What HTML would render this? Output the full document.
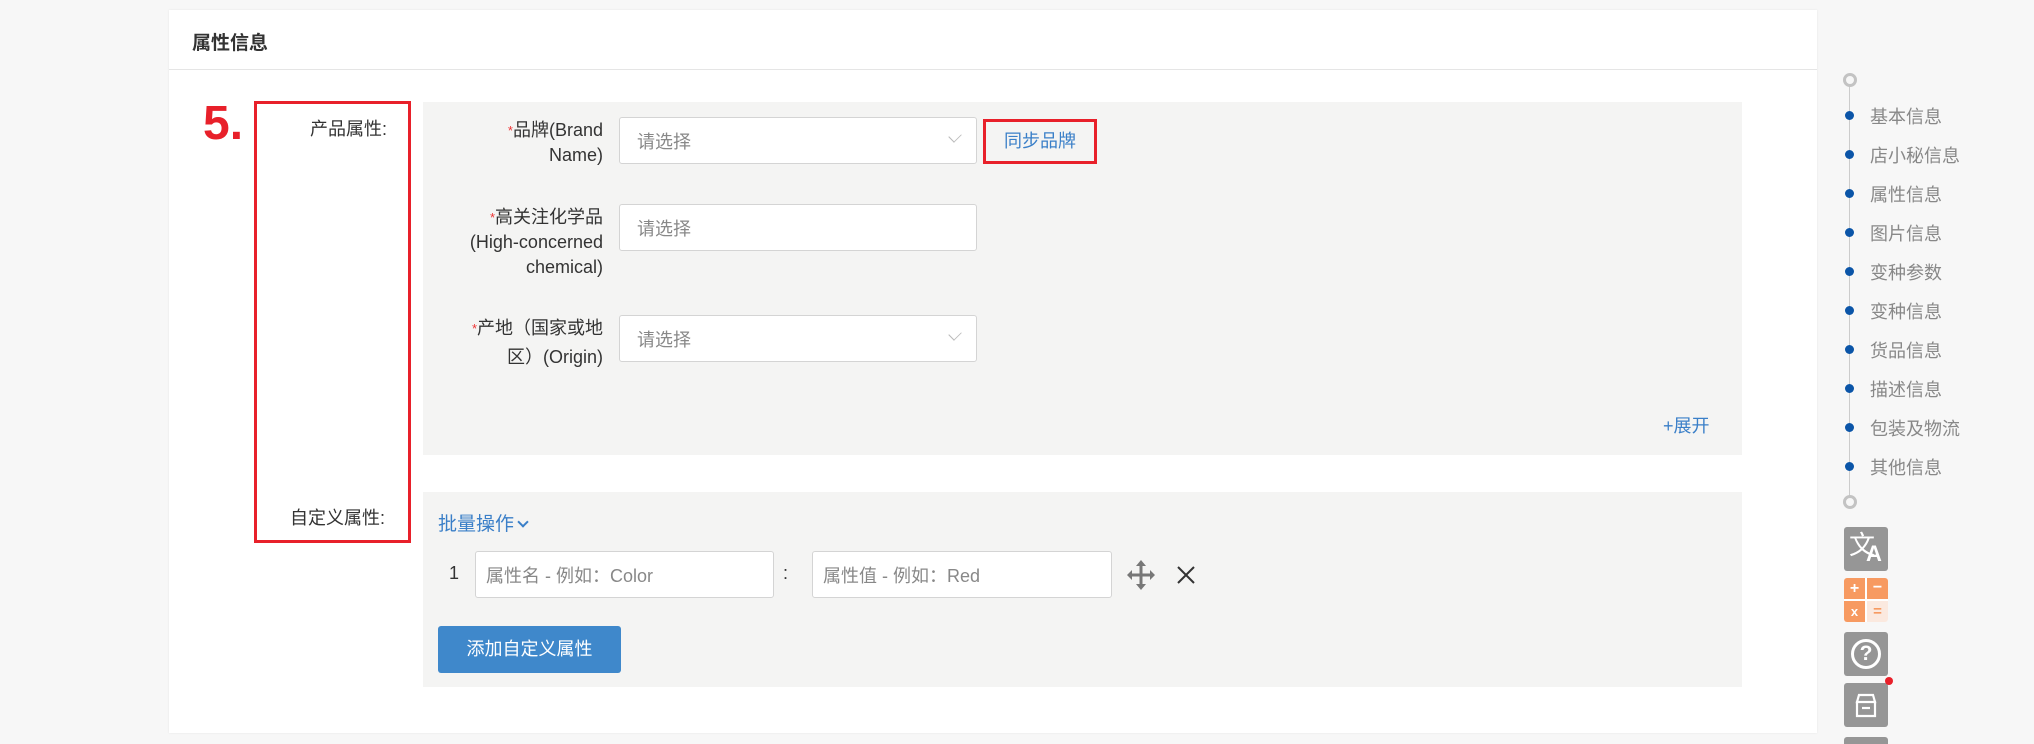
<!DOCTYPE html>
<html style="width:2034px;height:744px;overflow:hidden"><head><meta charset="utf-8"><style>
*{margin:0;padding:0;box-sizing:border-box}
body{width:2034px;height:744px;background:#f7f7f7;position:relative;overflow:hidden;font-family:"Liberation Sans","Noto Sans CJK SC",sans-serif;font-size:18px;color:#333}
.a{position:absolute}
.card{left:169px;top:10px;width:1648px;height:723px;background:#fff;box-shadow:0 0 2px rgba(0,0,0,.08)}
.inp{position:absolute;background:#fff;border:1px solid #d4d4d4;border-radius:3px;color:#888;font-size:18px;padding-left:17px;display:flex;align-items:center}
.lab{position:absolute;text-align:right;line-height:25px;font-size:18px;color:#333}
.st{color:#e33;font-size:13px;vertical-align:top}
.chev{position:absolute;right:16px;top:13px;width:10px;height:10px;border-right:1px solid #bbb;border-bottom:1px solid #bbb;transform:rotate(45deg) scale(.8,1.1)}
.nav{position:absolute;left:1870px;font-size:18px;color:#888}
.dot{position:absolute;left:1845px;width:9px;height:9px;border-radius:50%;background:#0b55a8}
.ic{position:absolute;left:1844px;width:44px;height:44px;border-radius:3px;background:#969696}
</style></head><body>
<div class="a card"></div>
<div class="a" style="left:192px;top:28px;font-size:19px;font-weight:bold;color:#333">属性信息</div>
<div class="a" style="left:169px;top:69px;width:1648px;height:1px;background:#e5e5e5"></div>

<div class="a" style="left:203px;top:96px;font-size:48px;font-weight:bold;color:#e8202a;font-family:'Liberation Sans',sans-serif">5.</div>
<div class="a" style="left:254px;top:101px;width:157px;height:442px;border:3px solid #e8202a"></div>
<div class="a" style="left:310px;top:115px;font-size:18px">产品属性:</div>
<div class="a" style="left:290px;top:504px;font-size:18px">自定义属性:</div>

<div class="a" style="left:423px;top:102px;width:1319px;height:353px;background:#f4f4f3"></div>
<div class="a" style="left:423px;top:492px;width:1319px;height:195px;background:#f4f4f3"></div>

<div class="lab" style="right:1431px;top:118px"><span class="st">*</span>品牌(Brand<br>Name)</div>
<div class="inp" style="left:619px;top:117px;width:358px;height:47px">请选择<span class="chev"></span></div>
<div class="a" style="left:983px;top:119px;width:114px;height:45px;border:3px solid #e8202a;color:#3a7fc8;font-size:18px;text-align:center;line-height:39px">同步品牌</div>

<div class="lab" style="right:1431px;top:205px"><span class="st">*</span>高关注化学品<br>(High-concerned<br>chemical)</div>
<div class="inp" style="left:619px;top:204px;width:358px;height:47px">请选择</div>

<div class="lab" style="right:1431px;top:314px;line-height:29px"><span class="st">*</span>产地（国家或地<br>区）(Origin)</div>
<div class="inp" style="left:619px;top:315px;width:358px;height:47px">请选择<span class="chev"></span></div>

<div class="a" style="left:1663px;top:412px;color:#3a7fc8;font-size:18px">+展开</div>

<div class="a" style="left:438px;top:509px;color:#3a7fc8;font-size:19px">批量操作 <span style="display:inline-block;width:8px;height:8px;border-right:2px solid #3a7fc8;border-bottom:2px solid #3a7fc8;transform:rotate(45deg);position:relative;top:-4px"></span></div>
<div class="a" style="left:449px;top:563px;font-size:18px">1</div>
<div class="inp" style="left:475px;top:551px;width:299px;height:47px;padding-left:10px">属性名 - 例如：Color</div>
<div class="a" style="left:783px;top:563px;font-size:18px">:</div>
<div class="inp" style="left:812px;top:551px;width:300px;height:47px;padding-left:10px">属性值 - 例如：Red</div>
<svg class="a" style="left:1127px;top:560px" width="28" height="30" viewBox="0 0 28 30"><g fill="#777"><path d="M14 0l5 6h-3.5v7.5H23V10l5 5-5 5v-3.5h-7.5V24H19l-5 6-5-6h3.5v-7.5H5V20l-5-5 5-5v3.5h7.5V6H9z"/></g></svg>
<svg class="a" style="left:1177px;top:566px" width="18" height="18" viewBox="0 0 18 18"><path d="M1 1L17 17M17 1L1 17" stroke="#333" stroke-width="2"/></svg>
<div class="a" style="left:438px;top:626px;width:183px;height:47px;background:#3f88cb;border-radius:3px;color:#fff;font-size:18px;text-align:center;line-height:47px">添加自定义属性</div>

<div class="a" style="left:1849px;top:80px;width:1px;height:422px;background:#ccc"></div>
<div class="a" style="left:1843px;top:73px;width:14px;height:14px;border:3px solid #c3c3c3;border-radius:50%;background:#f7f7f7"></div>
<div class="a" style="left:1843px;top:495px;width:14px;height:14px;border:3px solid #c3c3c3;border-radius:50%;background:#f7f7f7"></div>
<div class="dot" style="top:111px"></div><div class="nav" style="top:103px">基本信息</div>
<div class="dot" style="top:150px"></div><div class="nav" style="top:142px">店小秘信息</div>
<div class="dot" style="top:189px"></div><div class="nav" style="top:181px">属性信息</div>
<div class="dot" style="top:228px"></div><div class="nav" style="top:220px">图片信息</div>
<div class="dot" style="top:267px"></div><div class="nav" style="top:259px">变种参数</div>
<div class="dot" style="top:306px"></div><div class="nav" style="top:298px">变种信息</div>
<div class="dot" style="top:345px"></div><div class="nav" style="top:337px">货品信息</div>
<div class="dot" style="top:384px"></div><div class="nav" style="top:376px">描述信息</div>
<div class="dot" style="top:423px"></div><div class="nav" style="top:415px">包装及物流</div>
<div class="dot" style="top:462px"></div><div class="nav" style="top:454px">其他信息</div>

<div class="ic" style="top:527px"><div style="position:absolute;left:5px;top:2px;color:#fff;font-size:26px;font-family:'Noto Sans CJK SC',sans-serif;line-height:30px">文</div><div style="position:absolute;left:22px;top:14px;color:#fff;font-size:22px;font-weight:bold">A</div></div>
<div class="a" style="left:1844px;top:578px;width:44px;height:44px;border-radius:3px;overflow:hidden;background:#fff">
<div class="a" style="left:0;top:0;width:21px;height:21px;background:#f79a61;color:#fff;text-align:center;line-height:21px;font-weight:bold;font-size:16px">+</div>
<div class="a" style="left:23px;top:0;width:21px;height:21px;background:#f79a61;color:#fff;text-align:center;line-height:20px;font-weight:bold;font-size:16px">−</div>
<div class="a" style="left:0;top:23px;width:21px;height:21px;background:#f79a61;color:#fff;text-align:center;line-height:21px;font-weight:bold;font-size:13px">x</div>
<div class="a" style="left:23px;top:23px;width:21px;height:21px;background:#fbe9df;color:#f79a61;text-align:center;line-height:21px;font-weight:bold;font-size:15px">=</div></div>
<div class="ic" style="top:632px"><div style="position:absolute;left:7px;top:7px;width:30px;height:30px;border:3px solid #fff;border-radius:50%;color:#fff;font-weight:bold;font-size:21px;text-align:center;line-height:24px">?</div></div>
<div class="ic" style="top:683px"><svg width="44" height="44" viewBox="0 0 44 44"><path d="M13 19h18v14H13zM15 12h14l2 7H13z" fill="none" stroke="#fff" stroke-width="2.2"/><path d="M18 25h8" stroke="#fff" stroke-width="2.2"/></svg></div>
<div class="a" style="left:1885px;top:677px;width:8px;height:8px;border-radius:50%;background:#e8202a"></div>
<div class="ic" style="top:737px"></div>
</body></html>
